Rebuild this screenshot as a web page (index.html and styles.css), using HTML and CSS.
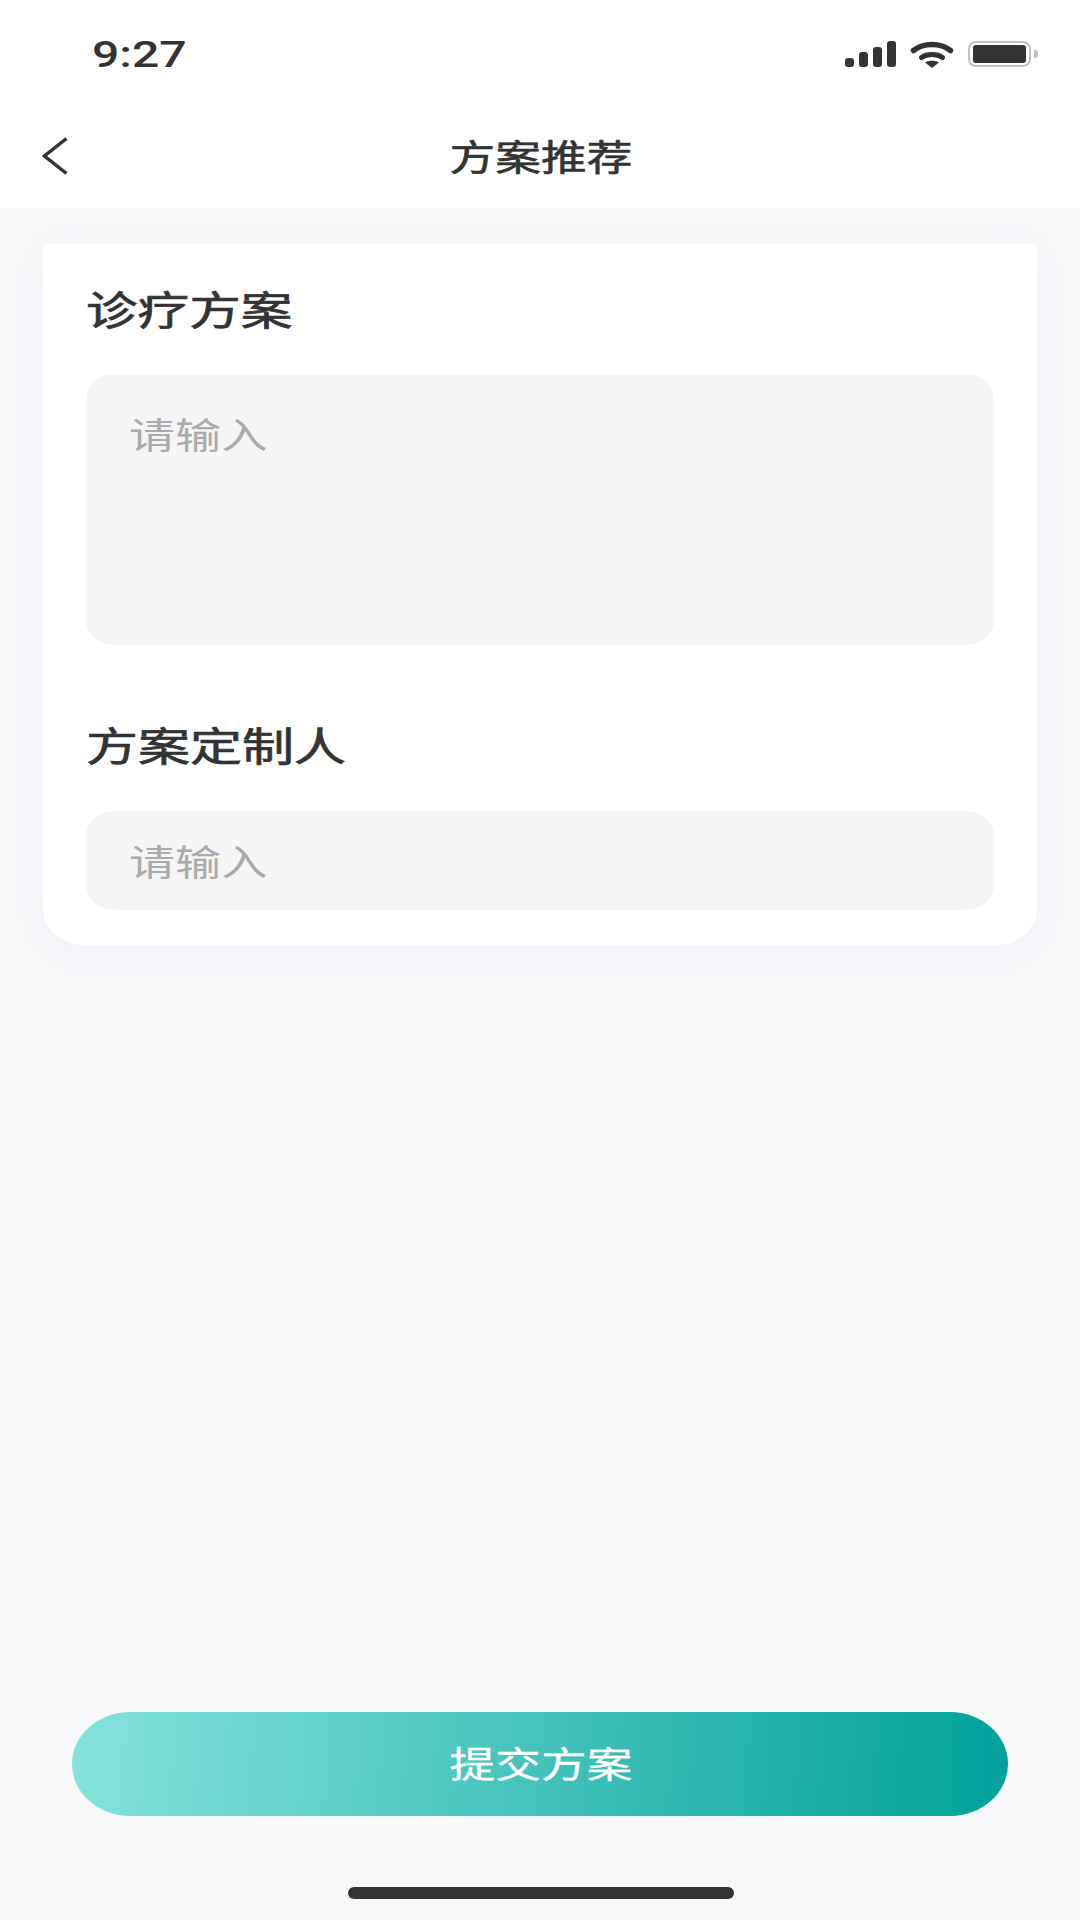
FILE: index.html
```html
<!doctype html>
<html lang="zh">

<head>
    <meta charset="UTF-8" />
    <meta name="viewport" content="width=device-width, initial-scale=1.0" />
    <title>方案推荐</title>
    <link rel="stylesheet" href="styles.css">
</head>

<body>
    <div class="app">
        <div class="header">
            <div class="status-bar">
                <span class="time">9:27</span>
                <div class="status-icons">
                    <div class="signal">
                        <i class="bar1"></i><i class="bar2"></i><i class="bar3"></i><i class="bar4"></i>
                    </div>
                    <svg class="wifi" width="44" height="27" viewBox="0 0 44 27">
                        <path d="M3.5 9.5C13.5 1.5 30.5 1.5 40.5 9.5" fill="none" stroke="#333" stroke-width="5.5" stroke-linecap="round" />
                        <path d="M11.5 16.5C17 12.5 27 12.5 32.5 16.5" fill="none" stroke="#333" stroke-width="5" stroke-linecap="round" />
                        <path d="M15 21.5C19 19 25 19 29 21.5L22 27Z" fill="#333" />
                    </svg>
                    <div class="battery">
                        <div class="battery-body"><div class="battery-level"></div></div>
                        <div class="battery-nub"></div>
                    </div>
                </div>
            </div>
            <div class="nav-bar">
                <svg class="back" width="26" height="38" viewBox="0 0 26 38">
                    <path d="M24.5 1.5L2.5 19L24.5 36.5" fill="none" stroke="#333" stroke-width="3.5" />
                </svg>
                <span class="title">方案推荐</span>
            </div>
        </div>

        <div class="card">
            <div class="field-label"><span>诊疗方案</span></div>
            <div class="input input-large"><span>请输入</span></div>
            <div class="field-label second"><span>方案定制人</span></div>
            <div class="input input-small"><span>请输入</span></div>
        </div>

        <button class="submit-btn"><span>提交方案</span></button>
        <div class="home-bar"></div>
    </div>
</body>

</html>
```

FILE: styles.css
```css
body {
    margin: 0;
    font-family: "Noto Sans CJK SC", "Noto Sans", sans-serif;
    color: #333;
    background: #f7f8fa;
}

.app {
    width: 1080px;
    height: 1920px;
    display: flex;
    flex-direction: column;
    overflow: hidden;
}

.header {
    background: white;
    height: 208px;
}

.status-bar {
    height: 108px;
    padding: 0 42px 0 92px;
    display: flex;
    align-items: center;
    justify-content: space-between;
}

.time {
    display: inline-block;
    font-family: Roboto, sans-serif;
    font-size: 37px;
    font-weight: 500;
    transform: scaleX(1.3);
    transform-origin: left center;
}

.status-icons {
    display: flex;
    align-items: center;
    gap: 14px;
}

.signal {
    display: flex;
    align-items: flex-end;
    gap: 5px;
    height: 26px;
}

.signal i {
    display: block;
    width: 9px;
    background: #333;
    border-radius: 3px;
}

.bar1 { height: 9px; }
.bar2 { height: 15px; }
.bar3 { height: 20px; }
.bar4 { height: 26px; }

.battery {
    display: flex;
    align-items: center;
    gap: 3px;
}

.battery-body {
    box-sizing: border-box;
    width: 63px;
    height: 26px;
    padding: 2px 3px;
    border: 2px solid #c0c0c0;
    border-radius: 8px;
}

.battery-level {
    height: 100%;
    background: #333;
    border-radius: 3px;
}

.battery-nub {
    width: 4px;
    height: 8px;
    background: #c0c0c0;
    border-radius: 0 3px 3px 0;
}

.nav-bar {
    height: 100px;
    position: relative;
    display: flex;
    align-items: center;
    justify-content: center;
}

.back {
    position: absolute;
    left: 42px;
    top: 29px;
}

.title {
    display: inline-block;
    margin: -6px 0 0 2px;
    font-size: 36px;
    -webkit-text-stroke: 0.6px #333;
    transform: scaleX(1.27);
}

.card {
    margin: 36px 43px 0;
    padding: 34px 43px 36px;
    background: white;
    border-radius: 0 0 46px 46px / 0 0 36px 36px;
    box-shadow: 0 6px 40px rgba(70, 90, 150, 0.04);
}

.field-label {
    height: 60px;
    line-height: 60px;
    margin-bottom: 36px;
    font-size: 40px;
    -webkit-text-stroke: 0.7px #333;
}

.field-label span,
.input span,
.submit-btn span {
    display: inline-block;
}

.field-label span {
    transform: scaleX(1.29);
    transform-origin: left center;
}

.second {
    margin-top: 69px;
    margin-bottom: 37px;
}

.second span {
    transform: scaleX(1.3);
}

.input {
    background: #f5f5f5;
    border-radius: 30px / 24px;
    padding-left: 45px;
    color: #aaa;
    font-size: 36px;
}

.input span {
    margin-left: -2px;
    transform: scaleX(1.28);
    transform-origin: left center;
}

.input-large {
    height: 271px;
    box-sizing: border-box;
    padding-top: 33px;
}

.input-small {
    height: 99px;
    line-height: 99px;
}

.submit-btn {
    display: block;
    width: 936px;
    height: 104px;
    margin: auto 0 0 72px;
    padding: 0 0 4px 2px;
    border: none;
    border-radius: 58px / 52px;
    background: linear-gradient(95deg, #86e2dd 0%, #00a199 100%);
    color: white;
    font-family: inherit;
    font-size: 36px;
    -webkit-text-stroke: 0.3px white;
}

.submit-btn span {
    transform: scaleX(1.27);
}

.home-bar {
    width: 386px;
    height: 12px;
    margin: 71px 0 21px 348px;
    background: #333;
    border-radius: 6px;
}
```
